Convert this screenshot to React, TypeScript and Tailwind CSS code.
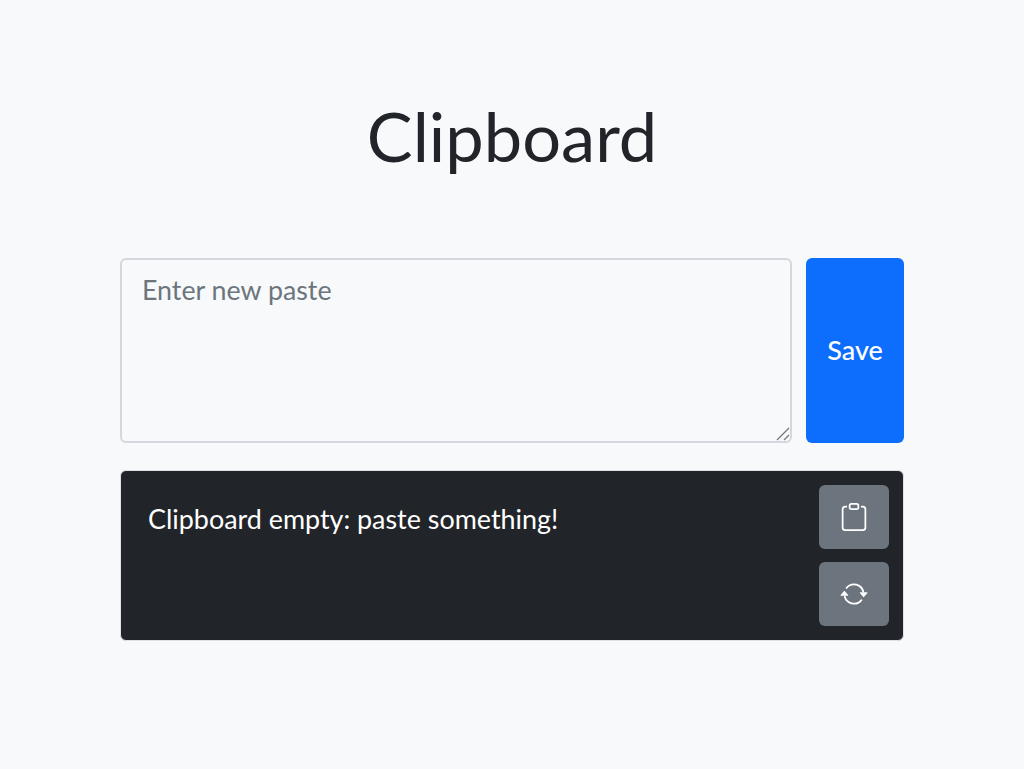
import { BsArrowRepeat, BsClipboard } from "react-icons/bs";

export default function App() {
  return (
    <div className="min-h-[769px] bg-[#f8f9fa] pt-[93px] font-['Lato',sans-serif] text-[#212529]">
      <h1 className="text-center text-[68.6px] leading-[86px] font-normal">Clipboard</h1>

      <div className="mx-auto mt-[79px] w-[784px]">
        <div className="flex gap-[14px]">
          <div className="relative flex-1">
            <textarea
              className="block h-[185px] w-full resize-none rounded-[6px] border-2 border-[#d3d8de] bg-[#f8f9fa] px-[20px] py-[11px] text-[26.8px] leading-[39px] outline-none placeholder:text-[#6c757d]"
              placeholder="Enter new paste"
            />
            <svg className="absolute right-[2px] bottom-[2px] size-[14px] text-[#777]" viewBox="0 0 14 14" fill="none" stroke="currentColor" strokeWidth="1.2">
              <path d="M1 13 13 1" />
              <path d="M8 13 13 8" />
            </svg>
          </div>
          <button className="w-[98px] rounded-[6px] bg-[#0d6efd] text-[27px] font-medium text-white">Save</button>
        </div>

        <div className="mt-[27px] flex h-[171px] justify-between rounded-[6px] border border-[#dee2e6] bg-[#212529] py-[14px] pr-[14px] pl-[27px] text-white">
          <p className="pt-[14px] text-[26.9px] leading-[39px]">Clipboard empty: paste something!</p>
          <div className="flex flex-col gap-[13px]">
            <button className="flex h-[64px] w-[70px] items-center justify-center rounded-[6px] bg-[#6c757d]">
              <BsClipboard className="size-[28px]" />
            </button>
            <button className="flex h-[64px] w-[70px] items-center justify-center rounded-[6px] bg-[#6c757d]">
              <BsArrowRepeat className="size-[28px]" />
            </button>
          </div>
        </div>
      </div>
    </div>
  );
}
